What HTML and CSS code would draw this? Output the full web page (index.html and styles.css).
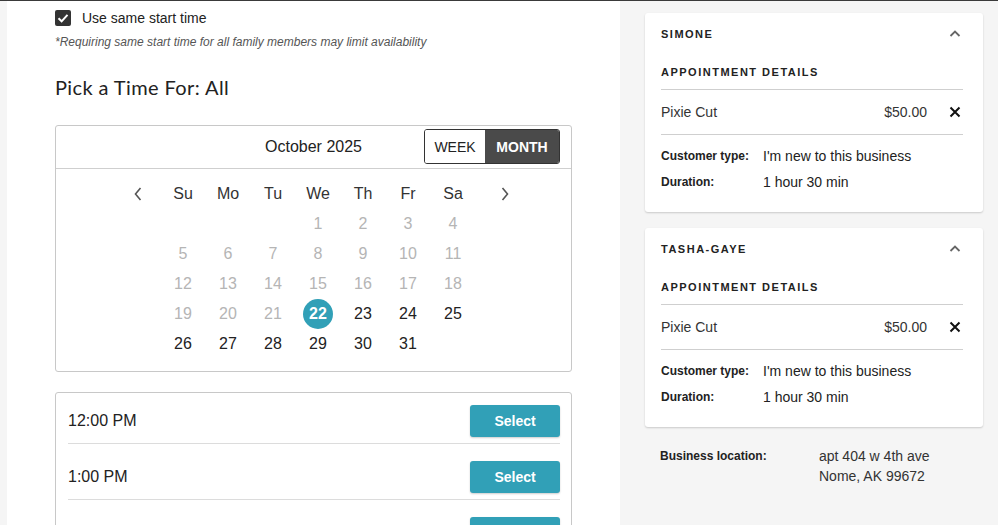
FILE: index.html
```html
<!DOCTYPE html>
<html>
<head>
<meta charset="utf-8">
<link rel="stylesheet" href="styles.css">
</head>
<body>
<div class="page">
  <main class="main">
    <label class="check-row">
      <span class="checkbox"><svg viewBox="0 0 16 16" width="16" height="16"><path d="M3.5 8.3 L6.6 11.3 L12.5 4.8" fill="none" stroke="#fff" stroke-width="2"/></svg></span>
      <span class="check-label">Use same start time</span>
    </label>
    <p class="note">*Requiring same start time for all family members may limit availability</p>
    <h2 class="pick-title">Pick a Time For: All</h2>

    <section class="calendar">
      <div class="cal-head">
        <div class="cal-month">October 2025</div>
        <div class="toggle">
          <span class="tog tog-week">WEEK</span>
          <span class="tog tog-month">MONTH</span>
        </div>
      </div>
      <div class="cal-body">
        <div class="cal-grid">
          <span class="nav"><svg viewBox="0 0 10 16" width="10" height="16"><path d="M7.5 2 L2.5 8 L7.5 14" fill="none" stroke="#555" stroke-width="1.6"/></svg></span>
          <span class="dow">Su</span><span class="dow">Mo</span><span class="dow">Tu</span><span class="dow">We</span><span class="dow">Th</span><span class="dow">Fr</span><span class="dow">Sa</span>
          <span class="nav"><svg viewBox="0 0 10 16" width="10" height="16"><path d="M2.5 2 L7.5 8 L2.5 14" fill="none" stroke="#555" stroke-width="1.6"/></svg></span>

          <span></span><span></span><span></span><span></span>
          <span class="d off">1</span><span class="d off">2</span><span class="d off">3</span><span class="d off">4</span><span></span>

          <span></span>
          <span class="d off">5</span><span class="d off">6</span><span class="d off">7</span><span class="d off">8</span><span class="d off">9</span><span class="d off">10</span><span class="d off">11</span><span></span>

          <span></span>
          <span class="d off">12</span><span class="d off">13</span><span class="d off">14</span><span class="d off">15</span><span class="d off">16</span><span class="d off">17</span><span class="d off">18</span><span></span>

          <span></span>
          <span class="d off">19</span><span class="d off">20</span><span class="d off">21</span><span class="d sel"><b>22</b></span><span class="d">23</span><span class="d">24</span><span class="d">25</span><span></span>

          <span></span>
          <span class="d">26</span><span class="d">27</span><span class="d">28</span><span class="d">29</span><span class="d">30</span><span class="d">31</span><span></span><span></span>
        </div>
      </div>
    </section>

    <section class="slots">
      <div class="slot"><span class="slot-time">12:00 PM</span><button class="select-btn">Select</button></div>
      <div class="slot"><span class="slot-time">1:00 PM</span><button class="select-btn">Select</button></div>
      <div class="slot"><span class="slot-time">2:00 PM</span><button class="select-btn">Select</button></div>
    </section>
  </main>

  <aside class="side">
    <div class="card">
      <div class="card-head">
        <span class="name">SIMONE</span>
        <svg class="chev" viewBox="0 0 14 10" width="14" height="10"><path d="M2.5 7 L7 2.5 L11.5 7" fill="none" stroke="#666" stroke-width="1.8"/></svg>
      </div>
      <div class="appt-title">APPOINTMENT DETAILS</div>
      <div class="service">
        <span class="svc-name">Pixie Cut</span>
        <span class="svc-price">$50.00</span>
        <svg class="close" viewBox="0 0 12 12" width="12" height="12"><path d="M1.5 1.5 L10.5 10.5 M10.5 1.5 L1.5 10.5" stroke="#111" stroke-width="2"/></svg>
      </div>
      <div class="info">
        <div class="info-row"><span class="info-label">Customer type:</span><span class="info-val">I'm new to this business</span></div>
        <div class="info-row"><span class="info-label">Duration:</span><span class="info-val">1 hour 30 min</span></div>
      </div>
    </div>

    <div class="card">
      <div class="card-head">
        <span class="name">TASHA-GAYE</span>
        <svg class="chev" viewBox="0 0 14 10" width="14" height="10"><path d="M2.5 7 L7 2.5 L11.5 7" fill="none" stroke="#666" stroke-width="1.8"/></svg>
      </div>
      <div class="appt-title">APPOINTMENT DETAILS</div>
      <div class="service">
        <span class="svc-name">Pixie Cut</span>
        <span class="svc-price">$50.00</span>
        <svg class="close" viewBox="0 0 12 12" width="12" height="12"><path d="M1.5 1.5 L10.5 10.5 M10.5 1.5 L1.5 10.5" stroke="#111" stroke-width="2"/></svg>
      </div>
      <div class="info">
        <div class="info-row"><span class="info-label">Customer type:</span><span class="info-val">I'm new to this business</span></div>
        <div class="info-row"><span class="info-label">Duration:</span><span class="info-val">1 hour 30 min</span></div>
      </div>
    </div>

    <div class="location">
      <span class="loc-label">Business location:</span>
      <span class="loc-val">apt 404 w 4th ave<br>Nome, AK 99672</span>
    </div>
  </aside>
</div>
</body>
</html>
```

FILE: styles.css
```css
* { box-sizing: border-box; }
html, body { margin: 0; padding: 0; }
body {
  background: #f5f5f5;
  font-family: "Liberation Sans", Arial, sans-serif;
  color: #222;
  width: 998px;
  height: 525px;
  overflow: hidden;
}
.page {
  display: flex;
  border-top: 1px solid #3a3a3a;
  height: 525px;
  overflow: hidden;
}
.main {
  width: 613px;
  margin-left: 7px;
  background: #fff;
  padding: 9px 48px 0 48px;
  overflow: hidden;
}
.check-row {
  display: flex;
  align-items: center;
  gap: 11px;
  height: 16px;
}
.checkbox {
  width: 16px;
  height: 16px;
  background: #333;
  border-radius: 2px;
  display: flex;
}
.check-label { font-size: 14px; color: #222; }
.note {
  margin: 9px 0 0 0;
  font-size: 12px;
  font-style: italic;
  color: #555;
  line-height: 14px;
}
.pick-title {
  margin: 26px 0 0 0;
  font-family: Lato, "Liberation Sans", sans-serif;
  font-weight: 400;
  font-size: 20px;
  letter-spacing: 0.4px;
  line-height: 24px;
  color: #222;
}
.calendar {
  margin-top: 26px;
  border: 1px solid #c8c8c8;
  border-radius: 3px;
  width: 517px;
}
.cal-head {
  height: 43px;
  border-bottom: 1px solid #cfcfcf;
  display: flex;
  align-items: center;
  justify-content: center;
  position: relative;
}
.cal-month { font-size: 16px; color: #222; }
.toggle {
  position: absolute;
  right: 11px;
  top: 3px;
  display: flex;
  height: 35px;
  border: 1px solid #333;
  border-radius: 3px;
  overflow: hidden;
}
.tog {
  display: flex;
  align-items: center;
  justify-content: center;
  font-size: 14px;
}
.tog-week { width: 60px; color: #222; background: #fff; }
.tog-month { width: 74px; color: #fff; background: #4a4a4a; font-weight: 700; }
.cal-body { padding: 10px 0 12px 0; }
.cal-grid {
  display: grid;
  padding-left: 59.5px;
  grid-template-columns: repeat(8, 45px) 59px;
  grid-auto-rows: 30px;
  align-items: center;
  justify-items: center;
}
.cal-grid > * { display: flex; align-items: center; justify-content: center; }
.nav { width: 45px; height: 30px; }
.dow { font-size: 16px; color: #333; }
.d { font-size: 16px; color: #222; width: 30px; height: 30px; }
.d.off { color: #b5b5b5; }
.d.sel {
  background: #31a0b7;
  border-radius: 50%;
  color: #fff;
}
.d.sel b { font-weight: 700; }
.slots {
  margin-top: 20px;
  border: 1px solid #c8c8c8;
  border-radius: 3px;
  width: 517px;
  height: 200px;
  padding: 0 11px 0 12px;
}
.slot {
  display: flex;
  align-items: center;
  justify-content: space-between;
  padding: 17px 0 6px 0;
  border-bottom: 1px solid #dcdcdc;
}
.slot:first-child { padding-top: 12px; }
.slot-time { font-size: 16px; color: #222; }
.select-btn {
  width: 90px;
  height: 32px;
  border: none;
  border-radius: 3px;
  background: #31a0b7;
  color: #fff;
  font-family: "Liberation Sans", Arial, sans-serif;
  font-weight: 700;
  font-size: 14px;
  box-shadow: 0 1px 2px rgba(0,0,0,0.2);
  padding: 0;
}
.side {
  width: 378px;
  padding: 12px 15px 0 25px;
}
.card {
  background: #fff;
  border-radius: 3px;
  box-shadow: 0 1px 2px rgba(0,0,0,0.18);
  padding: 14px 20px 21px 16px;
  margin-bottom: 16px;
}
.card-head {
  display: flex;
  justify-content: space-between;
  align-items: center;
  height: 14px;
}
.name {
  font-size: 11px;
  font-weight: 700;
  letter-spacing: 1.5px;
  color: #222;
}
.chev { margin-right: 1px; }
.appt-title {
  margin-top: 24px;
  font-size: 11px;
  font-weight: 700;
  letter-spacing: 1.5px;
  line-height: 14px;
  color: #222;
  padding-bottom: 10px;
  border-bottom: 1px solid #cfcfcf;
}
.service {
  display: flex;
  align-items: center;
  height: 45px;
  border-bottom: 1px solid #cfcfcf;
  font-size: 14px;
  color: #333;
}
.svc-name { flex: 1; }
.svc-price { margin-right: 22px; }
.close { margin-right: 2px; }
.info { padding-top: 12px; }
.info-row {
  display: flex;
  align-items: center;
  height: 18px;
  margin-bottom: 8px;
}
.info-row:last-child { margin-bottom: 0; }
.info-label {
  width: 102px;
  font-size: 12px;
  font-weight: 700;
  color: #222;
}
.info-val { font-size: 14px; color: #222; }
.location {
  display: flex;
  padding: 3px 0 0 15px;
}
.loc-label {
  width: 159px;
  font-size: 12px;
  font-weight: 700;
  line-height: 20px;
  color: #222;
}
.loc-val { font-size: 14px; line-height: 20px; color: #333; }
```
